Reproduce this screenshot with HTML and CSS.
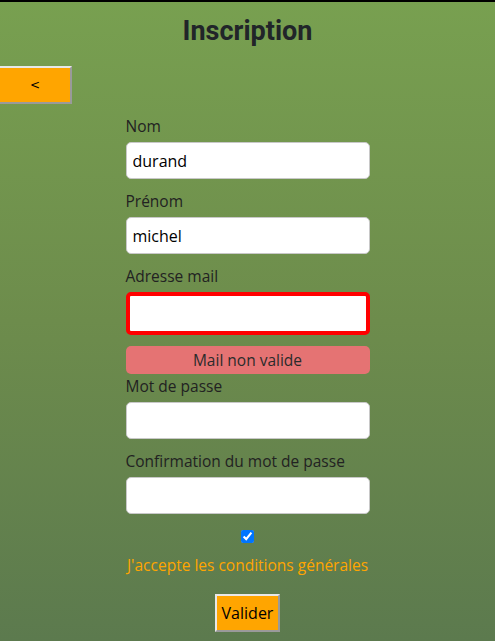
FILE: index.html
```html
<!DOCTYPE html>
<html lang="fr">
<head>
<meta charset="utf-8">
<title>Inscription</title>
<link rel="stylesheet" href="styles.css">
</head>
<body>
<div class="page">
  <h1 class="title">Inscription</h1>
  <button class="back-btn" type="button">&lt;</button>
  <form class="form">
    <label class="form-label">Nom</label>
    <input class="form-input" type="text" value="durand">
    <label class="form-label">Prénom</label>
    <input class="form-input" type="text" value="michel">
    <label class="form-label">Adresse mail</label>
    <input class="form-input form-input--error" type="text" value="">
    <div class="error-box">Mail non valide</div>
    <label class="form-label">Mot de passe</label>
    <input class="form-input" type="password" value="">
    <label class="form-label">Confirmation du mot de passe</label>
    <input class="form-input" type="password" value="">
    <div class="accept">
      <input class="accept-check" type="checkbox" checked>
      <span class="accept-text">J'accepte les conditions générales</span>
    </div>
    <div class="submit-row">
      <button class="submit-btn" type="button">Valider</button>
    </div>
  </form>
</div>
</body>
</html>
```

FILE: styles.css
```css
html, body {
  margin: 0;
  padding: 0;
  height: 100%;
}
body {
  font-family: "Open Sans", "DejaVu Sans", sans-serif;
  color: #212529;
  background: linear-gradient(#78a050 0%, #6d8c4c 50%, #5c7a4e 100%);
  border-top: 2px solid #000;
  box-sizing: border-box;
  overflow: hidden;
}
.page {
  display: flex;
  flex-direction: column;
}
.title {
  margin: 0;
  padding-top: 12px;
  font-family: Roboto, "Liberation Sans", sans-serif;
  font-weight: 700;
  font-size: 27px;
  line-height: 34px;
  text-align: center;
  color: #212529;
}
.back-btn {
  align-self: flex-start;
  margin-top: 18px;
  width: 72px;
  height: 38px;
  background: #ffa500;
  border: 2px solid;
  border-color: #e8e8e8 #9a9a9a #9a9a9a #e8e8e8;
  border-left: none;
  font-family: "DejaVu Sans", sans-serif;
  font-size: 12px;
  color: #000;
  padding: 0;
}
.form {
  width: 244px;
  align-self: center;
  display: flex;
  flex-direction: column;
  margin-top: 10px;
}
.form-label {
  font-size: 15.5px;
  line-height: 24px;
  margin-bottom: 4px;
  color: #222;
}
.form-input {
  box-sizing: border-box;
  height: 37px;
  margin: 0 0 10px;
  padding: 0 6px;
  border: 1px solid #c8c8c8;
  border-radius: 5px;
  background: #fff;
  font-family: "Open Sans", "DejaVu Sans", sans-serif;
  font-size: 16px;
  color: #000;
  outline: none;
}
.form-input--error {
  height: 43px;
  border: 4px solid #ff0000;
  margin-bottom: 11px;
}
.error-box {
  height: 28px;
  line-height: 28px;
  border-radius: 5px;
  background: #e57373;
  text-align: center;
  font-size: 15.5px;
  color: #2b2b2b;
}
.accept {
  display: flex;
  flex-direction: column;
  align-items: center;
  margin-top: 3px;
}
.accept-check {
  width: 13px;
  height: 13px;
  margin: 3px 0 0;
}
.accept-text {
  margin-top: 10px;
  font-size: 15.5px;
  line-height: 24px;
  color: #ffa500;
  white-space: nowrap;
}
.submit-row {
  display: flex;
  justify-content: center;
  margin-top: 17px;
}
.submit-btn {
  height: 38px;
  padding: 0 5px;
  background: #ffa500;
  border: 2px solid;
  border-color: #e8e8e8 #9a9a9a #9a9a9a #e8e8e8;
  font-family: "Open Sans", "DejaVu Sans", sans-serif;
  font-size: 16px;
  color: #000;
}
```
